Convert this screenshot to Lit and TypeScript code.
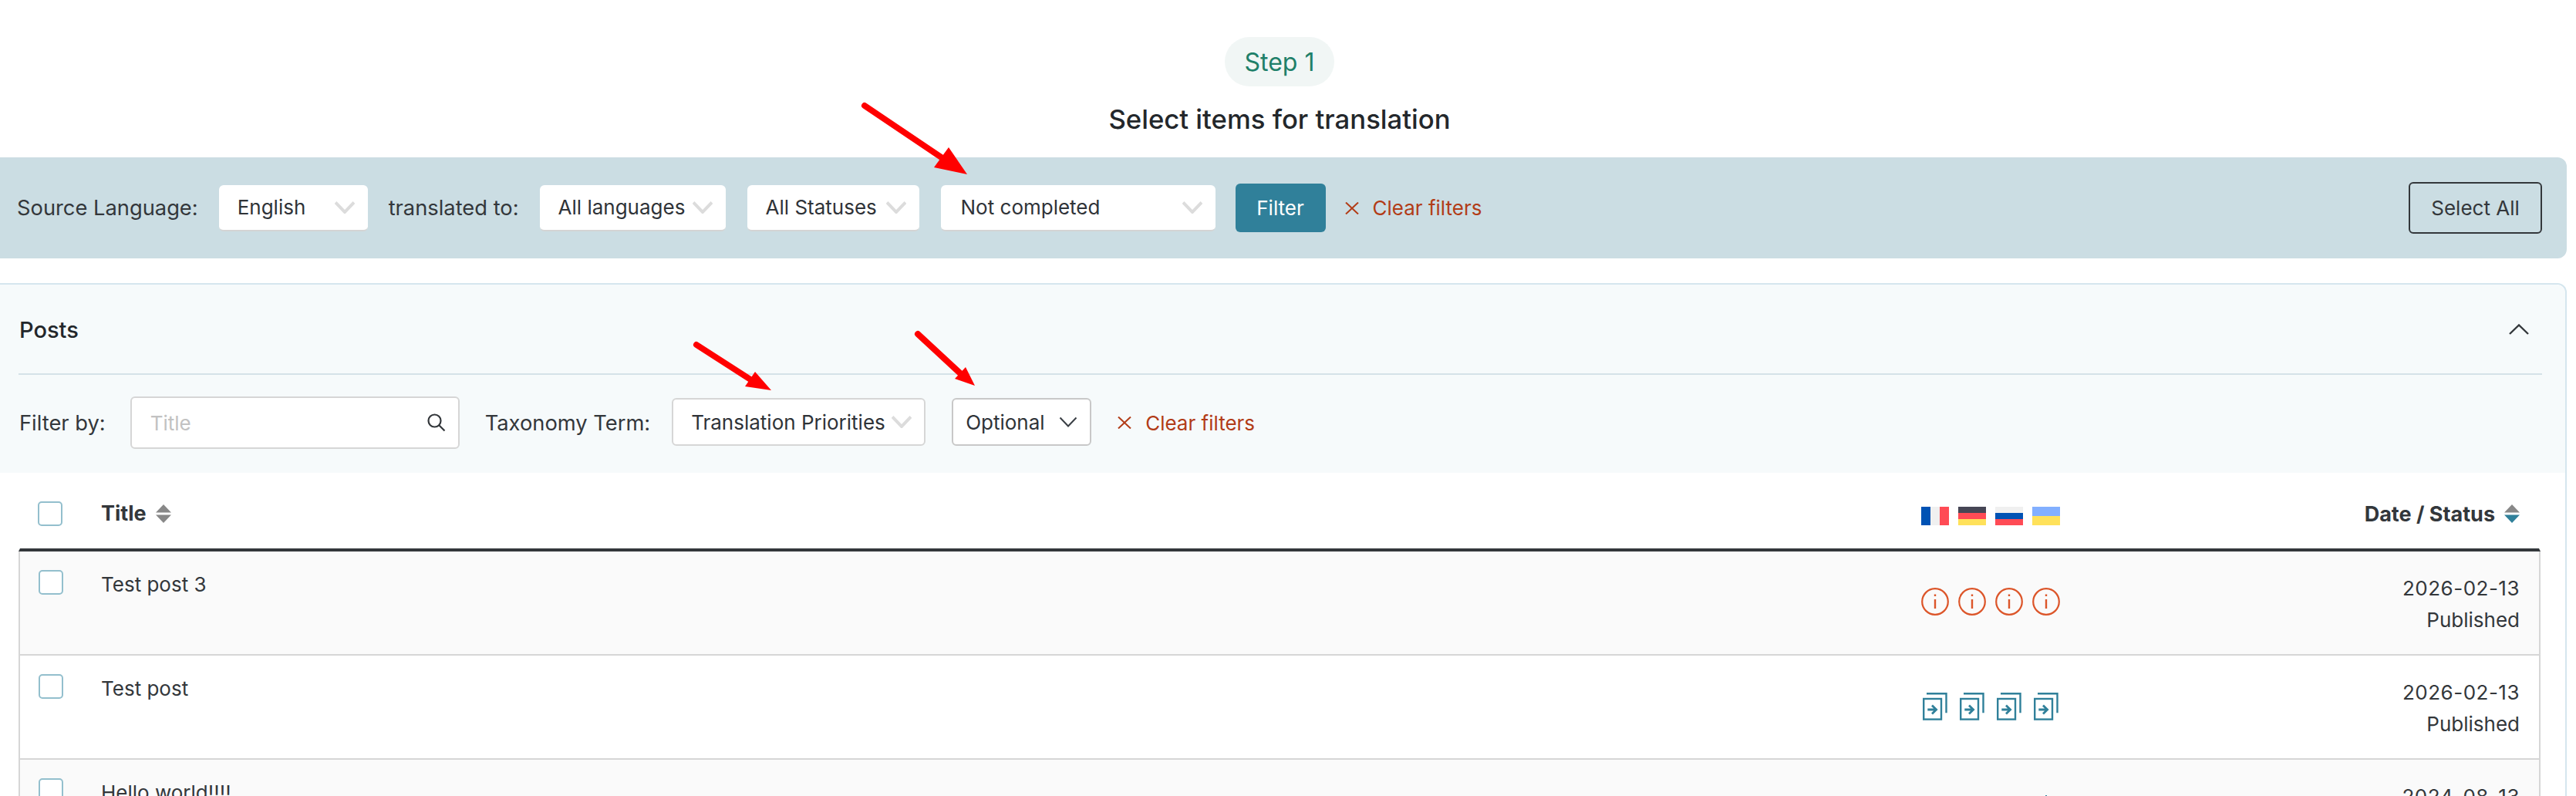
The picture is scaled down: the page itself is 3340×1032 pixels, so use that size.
import { LitElement, html, css, svg } from "lit";
import { customElement } from "lit/decorators.js";

const FLAGS = [
  svg`<rect width="12" height="24" fill="#0052b4"/><rect x="12" width="12" height="24" fill="#f0f0f0"/><rect x="24" width="12" height="24" fill="#ff4b55"/>`,
  svg`<rect width="36" height="8" fill="#464655"/><rect y="8" width="36" height="8" fill="#ff4b55"/><rect y="16" width="36" height="8" fill="#ffe15a"/>`,
  svg`<rect width="36" height="8" fill="#f0f0f0"/><rect y="8" width="36" height="8" fill="#0052b4"/><rect y="16" width="36" height="8" fill="#ff4b55"/>`,
  svg`<rect width="36" height="12" fill="#82afff"/><rect y="12" width="36" height="12" fill="#ffe15a"/>`,
];

const flag = (f: unknown) => html`<svg class="ic" width="36" height="24" viewBox="0 0 36 24">${f}</svg>`;
const info = () => html`<svg class="ic" width="36" height="36" viewBox="0 0 36 36" fill="none" stroke="#dc5529"><circle cx="18" cy="18" r="16.800" stroke-width="2.200"/><path d="M18 15v12" stroke-width="2.400"/><path d="M18 8.500v2.500" stroke-width="2.400"/></svg>`;
const copy = () => html`<svg class="ic" width="36" height="37" viewBox="0 0 36 37" fill="none" stroke="#30809a" stroke-width="2.400"><path d="M7 2.200h25.500v25"/><rect x="3.200" y="9" width="22.800" height="26.600"/><path d="M8.300 23h11.500M14 17.500l5.600 5.500-5.600 5.500" stroke-width="2.800"/></svg>`;
const sort = (active = false) => html`<svg class="sort" width="20" height="24" viewBox="0 0 20 24"><path d="M10 0l10 10.500H0z" fill="#888"/><path d="M10 24l10-10.500H0z" fill="${active ? "#30809a" : "#888"}"/></svg>`;
const chev = () => html`<svg class="chev" width="26" height="16" viewBox="0 0 26 16" fill="none" stroke="#dcdcdc" stroke-width="4"><path d="M1 1.500l12 12.500L25 1.500"/></svg>`;
const chevDark = () => html`<svg class="chev" width="26" height="14" viewBox="0 0 26 14" fill="none" stroke="#3a3f45" stroke-width="2"><path d="M2.500 1.500L13 12.500 23.500 1.500"/></svg>`;
const x = () => html`<svg width="18" height="16" viewBox="0 0 18 16" fill="none" stroke="#b23c17" stroke-width="2"><path d="M1 0.500l16 15M17 0.500L1 15.500"/></svg>`;
const arrow = (x1: number, y1: number, x2: number, y2: number, a: string) => svg`<line x1="${x1}" y1="${y1}" x2="${x2}" y2="${y2}" stroke="#f00" stroke-width="8" stroke-linecap="round"/><polygon points="${a}" fill="#f00"/>`;

interface Row { title: string; date: string; kind: "info" | "copy" | "tick"; alt: boolean }
const ROWS: Row[] = [
  { title: "Test post 3", date: "2026-02-13", kind: "info", alt: true },
  { title: "Test post", date: "2026-02-13", kind: "copy", alt: false },
  { title: "Hello world!!!!", date: "2024-08-13", kind: "tick", alt: true },
];

const rowIcons = (k: Row["kind"]) => {
  if (k === "tick") return html`<svg class="ic tick" width="36" height="2" viewBox="0 0 36 2"><rect x="17" width="2" height="2" fill="#30809a"/></svg>`;
  return FLAGS.map(() => (k === "info" ? info() : copy()));
};

@customElement("app-root")
export class AppRoot extends LitElement {
  static styles = css`
    :host { display: block; position: relative; height: 1032px; overflow: hidden; background: #fff; color: #33373b; font-family: Inter, "Liberation Sans", sans-serif; font-size: 26px; }
    * { box-sizing: border-box; }
    .head { display: flex; flex-direction: column; align-items: center; padding: 48px 22px 0 0; height: 204px; }
    .pill { width: 142px; height: 64px; border-radius: 32px; background: #f1f6f5; color: #1f8069; font-size: 32px; display: flex; align-items: center; justify-content: center; }
    h1 { margin: 20px 0 0; font-size: 34.700px; line-height: 45px; font-weight: 500; color: #23272b; white-space: nowrap; }
    .band { height: 131px; margin-right: 12px; background: #cbdde3; border-radius: 0 12px 12px 0; display: flex; align-items: center; padding: 0 32px 0 22px; }
    .label { white-space: nowrap; font-size: 27.300px; flex: none; }
    .to { margin-left: 27px; }
    .select { height: 60px; background: #fff; border-radius: 6px; border-bottom: 2px solid #d4d4d4; display: flex; align-items: center; justify-content: space-between; padding: 0 17px 0 24px; white-space: nowrap; color: #2f3338; flex: none; }
    .s-en { width: 193px; margin-left: 27px; }
    .s-lang { width: 241px; margin-left: 27px; }
    .s-stat { width: 223px; margin-left: 28px; }
    .s-comp { width: 356px; margin-left: 28px; padding-left: 26px; }
    .btn { width: 117px; height: 63px; margin-left: 26px; background: #30809a; color: #fff; border-radius: 6px; display: flex; align-items: center; justify-content: center; flex: none; }
    .clear { display: flex; align-items: center; gap: 18px; color: #b23c17; margin-left: 25px; white-space: nowrap; }
    .grow { flex: 1; }
    .all { width: 173px; height: 67px; border: 2px solid #33373b; border-radius: 6px; display: flex; align-items: center; justify-content: center; }
    .panel { margin: 32px 12px 0 0; height: 700px; border: 2px solid #d5e6ee; border-left: 0; border-radius: 0 12px 0 0; }
    .filters { background: #f6fafb; height: 244px; padding: 0 30px 0 24px; border-radius: 0 12px 0 0; }
    .title-row { height: 117px; display: flex; align-items: center; justify-content: space-between; border-bottom: 2px solid #d5e2e8; padding: 1px 17px 0 0; }
    .posts { font-size: 29px; font-weight: 500; color: #23272b; margin-left: 1px; }
    .filter-row { display: flex; align-items: center; height: 127px; padding: 0 0 3px 1px; }
    .input { width: 427px; height: 68px; margin-left: 32px; background: #fff; border: 2px solid #d6d6d6; border-radius: 6px; display: flex; align-items: center; justify-content: space-between; padding: 0 16px 0 24px; color: #c2c2c2; flex: none; }
    .tax { margin-left: 33px; }
    .s-tp { width: 329px; height: 62px; margin: 0 0 2px 28px; border: 2px solid #d6d6d6; padding: 0 16px 0 23px; }
    .s-opt { width: 181px; height: 62px; margin: 0 0 2px 34px; border: 2px solid #c8c8c8; padding: 0 15px 0 16px; }
    .filter-row .clear { margin-left: 34px; }
    .table { margin: 0 32px 0 24px; }
    .tr { display: grid; grid-template-columns: 105px 2360px 192px 1fr; }
    .th { height: 102px; padding-top: 8px; border: 0 solid transparent; border-width: 0 2px; border-bottom: 4px solid #33373b; font-weight: 700; align-items: center; }
    .th > div { display: flex; align-items: center; }
    .td { height: 135px; border: 2px solid #d6d6d6; border-width: 0 2px 2px; }
    .td.alt { background: #fafafa; }
    .cb { width: 32px; height: 32px; border: 2px solid #93bfcd; border-radius: 5px; background: #fff; }
    .cb.h { margin-left: 23px; }
    .td .cb { margin: 24px 0 0 24px; }
    .t { padding-top: 23px; line-height: 40px; }
    .th .t { padding: 0; font-size: 27px; }
    .sort { margin-left: 12px; flex: none; }
    .icons { display: flex; gap: 12px; }
    .th .icons { padding-top: 6px; }
    .td .icons { padding-top: 47px; }
    .ic { display: block; flex: none; }
    .tick { margin: -1px 0 0 144px; }
    .d { text-align: right; padding: 27px 25px 0 0; line-height: 41px; white-space: nowrap; }
    .date { letter-spacing: 0.500px; }
    .th .d { justify-content: flex-end; padding: 0 25px 0 0; font-size: 27px; }
    .arrows { position: absolute; inset: 0; width: 3340px; height: 1032px; pointer-events: none; }
  `;

  render() {
    return html`
      <div class="head"><div class="pill">Step 1</div><h1>Select items for translation</h1></div>
      <div class="band">
        <span class="label">Source Language:</span>
        <div class="select s-en">English ${chev()}</div>
        <span class="label to">translated to:</span>
        <div class="select s-lang">All languages ${chev()}</div>
        <div class="select s-stat">All Statuses ${chev()}</div>
        <div class="select s-comp">Not completed ${chev()}</div>
        <div class="btn">Filter</div>
        <div class="clear">${x()}<span>Clear filters</span></div>
        <div class="grow"></div>
        <div class="all">Select All</div>
      </div>
      <div class="panel">
        <div class="filters">
          <div class="title-row">
            <span class="posts">Posts</span>
            <svg width="26" height="14" viewBox="0 0 26 14" fill="none" stroke="#33373b" stroke-width="2.400"><path d="M1 13L13 1.500 25 13"/></svg>
          </div>
          <div class="filter-row">
            <span class="label">Filter by:</span>
            <div class="input"><span>Title</span>
              <svg width="24" height="24" viewBox="0 0 24 24" fill="none" stroke="#33373b" stroke-width="2.200"><circle cx="9.500" cy="9.500" r="8"/><path d="M15.500 15.500l7 7"/></svg>
            </div>
            <span class="label tax">Taxonomy Term:</span>
            <div class="select s-tp">Translation Priorities ${chev()}</div>
            <div class="select s-opt">Optional ${chevDark()}</div>
            <div class="clear">${x()}<span>Clear filters</span></div>
          </div>
        </div>
        <div class="table">
          <div class="tr th">
            <div><div class="cb h"></div></div>
            <div class="t">Title ${sort()}</div>
            <div class="icons">${FLAGS.map(flag)}</div>
            <div class="d">Date / Status ${sort(true)}</div>
          </div>
          ${ROWS.map(
            (r) => html`<div class="tr td ${r.alt ? "alt" : ""}">
              <div><div class="cb"></div></div>
              <div class="t">${r.title}</div>
              <div class="icons">${rowIcons(r.kind)}</div>
              <div class="d"><span class="date">${r.date}</span><br />Published</div>
            </div>`
          )}
        </div>
      </div>
      <svg class="arrows" viewBox="0 0 3340 1032">
        ${arrow(1121, 137, 1222, 205, "1230,191 1211,217 1254,226")}
        ${arrow(903, 447, 973, 492, "979,482 966,501 1000,506")}
        ${arrow(1190, 433, 1245, 484, "1252,476 1238,491 1264,500")}
      </svg>
    `;
  }
}
